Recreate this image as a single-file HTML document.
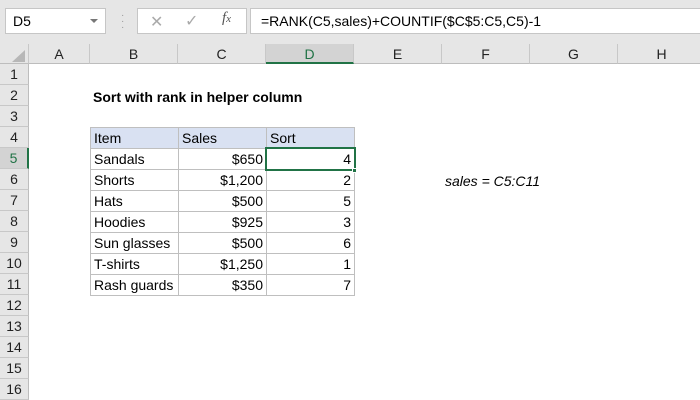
<!DOCTYPE html>
<html><head><style>
*{margin:0;padding:0;box-sizing:border-box}
body{width:700px;height:400px;overflow:hidden;background:#fff;font-family:"Liberation Sans",Arial,sans-serif;position:relative;font-size:14px;color:#000}
.a{position:absolute}
.top{left:0;top:0;width:700px;height:44px;background:#e6e6e6}
.box{background:#fff;border:1px solid #c6c6c6}
.ch{top:44px;height:20px;background:#e6e6e6;border-right:1px solid #c8c8c8;border-bottom:1px solid #bdbdbd;text-align:center;line-height:20px;font-size:14px;color:#222}
.rh{left:0;width:29px;height:21px;background:#e6e6e6;border-bottom:1px solid #c8c8c8;border-right:1px solid #bdbdbd;text-align:center;line-height:21px;font-size:14px;color:#222}
.c{height:21px;line-height:20px;padding:0 3px;border:1px solid #bfbfbf;white-space:nowrap;font-size:14px}
.r{text-align:right}
</style></head><body>
<div class="a top"></div>
<div class="a box" style="left:5px;top:8px;width:101px;height:26px;line-height:24px;padding-left:7px;font-size:14px">D5</div>
<div class="a" style="left:90px;top:19px;width:0;height:0;border-left:4px solid transparent;border-right:4px solid transparent;border-top:4px solid #777"></div>
<div class="a" style="left:121px;top:13px;color:#999;font-size:10px;line-height:6px">·<br>·<br>·</div>
<div class="a box" style="left:137px;top:8px;width:110px;height:26px"></div>
<div class="a" style="left:150px;top:12px;color:#aaa;font-size:16px">✕</div>
<div class="a" style="left:185px;top:11px;color:#aaa;font-size:16px">✓</div>
<div class="a" style="left:222px;top:10px;color:#555;font-size:15px;font-style:italic;font-family:'Liberation Serif',serif">f<span style="font-size:11px">x</span></div>
<div class="a box" style="left:250px;top:8px;width:460px;height:26px;line-height:24px;padding-left:10px;font-size:14px">=RANK(C5,sales)+COUNTIF($C$5:C5,C5)-1</div>
<div class="a ch" style="left:0;width:29px"></div>
<div class="a" style="left:12px;top:50px;width:0;height:0;border-left:13px solid transparent;border-bottom:12px solid #b7b7b7"></div>
<div class="a ch" style="left:29px;width:61px">A</div>
<div class="a ch" style="left:90px;width:88px">B</div>
<div class="a ch" style="left:178px;width:88px">C</div>
<div class="a ch" style="left:266px;width:88px;background:#d3d3d3;color:#217346;border-bottom:2px solid #217346">D</div>
<div class="a ch" style="left:354px;width:88px">E</div>
<div class="a ch" style="left:442px;width:88px">F</div>
<div class="a ch" style="left:530px;width:88px">G</div>
<div class="a ch" style="left:618px;width:88px">H</div>
<div class="a rh" style="top:64px">1</div>
<div class="a rh" style="top:85px">2</div>
<div class="a rh" style="top:106px">3</div>
<div class="a rh" style="top:127px">4</div>
<div class="a rh" style="top:148px;background:#d3d3d3;color:#217346;border-right:2px solid #217346">5</div>
<div class="a rh" style="top:169px">6</div>
<div class="a rh" style="top:190px">7</div>
<div class="a rh" style="top:211px">8</div>
<div class="a rh" style="top:232px">9</div>
<div class="a rh" style="top:253px">10</div>
<div class="a rh" style="top:274px">11</div>
<div class="a rh" style="top:295px">12</div>
<div class="a rh" style="top:316px">13</div>
<div class="a rh" style="top:337px">14</div>
<div class="a rh" style="top:358px">15</div>
<div class="a rh" style="top:379px">16</div>
<div class="a" style="left:93px;top:89px;font-weight:bold;font-size:14px">Sort with rank in helper column</div>
<div class="a" style="left:90px;top:127px">
<table style="border-collapse:collapse;table-layout:fixed">
<colgroup><col style="width:88px"><col style="width:88px"><col style="width:88px"></colgroup>
<tr style="background:#d9e1f2"><td class="c">Item</td><td class="c">Sales</td><td class="c">Sort</td></tr>
<tr><td class="c">Sandals</td><td class="c r">$650</td><td class="c r">4</td></tr>
<tr><td class="c">Shorts</td><td class="c r">$1,200</td><td class="c r">2</td></tr>
<tr><td class="c">Hats</td><td class="c r">$500</td><td class="c r">5</td></tr>
<tr><td class="c">Hoodies</td><td class="c r">$925</td><td class="c r">3</td></tr>
<tr><td class="c">Sun glasses</td><td class="c r">$500</td><td class="c r">6</td></tr>
<tr><td class="c">T-shirts</td><td class="c r">$1,250</td><td class="c r">1</td></tr>
<tr><td class="c">Rash guards</td><td class="c r">$350</td><td class="c r">7</td></tr>
</table></div>
<div class="a" style="left:265px;top:147px;width:91px;height:24px;border:2px solid #217346"></div>
<div class="a" style="left:352px;top:168px;width:5px;height:5px;background:#217346;border:1px solid #fff"></div>
<div class="a" style="left:445px;top:173px;font-style:italic">sales = C5:C11</div>
</body></html>
